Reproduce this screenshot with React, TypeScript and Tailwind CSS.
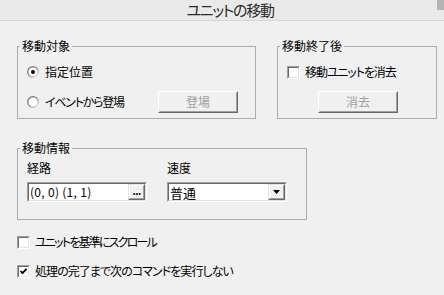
import type { ReactNode } from "react";

const Radio = ({ checked }: { checked?: boolean }) => (
  <svg width="12" height="12" viewBox="0 0 12 12" className="shrink-0">
    <defs>
      <linearGradient id="rg" x1="0" y1="0" x2="1" y2="1">
        <stop offset="0" stopColor="#6d6d6d" />
        <stop offset="0.55" stopColor="#9a9a9a" />
        <stop offset="1" stopColor="#f4f4f4" />
      </linearGradient>
    </defs>
    <circle cx="6" cy="6" r="5.3" fill="#fff" stroke="url(#rg)" strokeWidth="1.4" />
    {checked && <circle cx="6" cy="6" r="2" fill="#000" />}
  </svg>
);

const Check = ({ checked }: { checked?: boolean }) => (
  <div className="w-[13px] h-[13px] shrink-0 border border-[#a0a0a0] border-b-white border-r-white">
    <div className="w-full h-full border border-[#696969] border-b-[#e3e3e3] border-r-[#e3e3e3] bg-white flex items-center justify-center">
      {checked && (
        <svg width="9" height="9" viewBox="0 0 9 9">
          <polyline points="1.5,4 3.5,6.2 7.5,1.8" fill="none" stroke="#000" strokeWidth="1.8" />
        </svg>
      )}
    </div>
  </div>
);

const Button = ({ children, className }: { children: ReactNode; className?: string }) => (
  <div className={`w-[80px] h-[22px] border border-white border-b-[#696969] border-r-[#696969] ${className ?? ""}`}>
    <div className="w-full h-full border border-[#f0f0f0] border-b-[#a0a0a0] border-r-[#a0a0a0] flex items-center justify-center text-[#a0a0a0] text-[12px] leading-none">
      {children}
    </div>
  </div>
);

const Group = ({
  title,
  className,
  children,
}: {
  title: string;
  className: string;
  children: ReactNode;
}) => (
  <fieldset className={`border border-[#acacac] min-w-0 ${className}`}>
    <legend className="ml-[2px] px-[2px] text-[12px] leading-[16px]">{title}</legend>
    {children}
  </fieldset>
);

const SunkenBox = ({ children }: { children: ReactNode }) => (
  <div className="w-[120px] h-[20px] border border-[#a0a0a0] border-b-white border-r-white">
    <div className="w-full h-full border border-[#696969] border-b-[#e3e3e3] border-r-[#e3e3e3] bg-white flex items-center">
      {children}
    </div>
  </div>
);

const SmallButton = ({ children }: { children: ReactNode }) => (
  <div className="w-[17px] h-[16px] ml-auto border border-[#e3e3e3] border-b-[#696969] border-r-[#696969] bg-[#f0f0f0]">
    <div className="w-full h-full border border-white border-b-[#a0a0a0] border-r-[#a0a0a0] flex items-center justify-center">
      {children}
    </div>
  </div>
);

export default function App() {
  return (
    <div className="relative w-[444px] h-[295px] overflow-hidden bg-[#f0f0f0] text-black text-[12px] font-['Noto_Sans_CJK_JP','Noto_Sans',sans-serif] [font-feature-settings:'palt']">
      <div className="h-[21px] bg-[#e9e9e9] border-b border-[#d6d6d6] flex items-center justify-center pl-[16px] text-[15px] leading-[20px] tracking-[-1.3px] text-[#2a2a2a]">
        ユニットの移動
      </div>
      <div className="absolute top-0 right-0 w-[7px] h-[10px] bg-[#b4b4b4]" />

      <div className="pl-[17px] pt-[17px] flex flex-col">
        <div className="flex gap-[21px]">
          <Group title="移動対象" className="w-[239px] h-[81px]">
            <div className="pl-[9px] pr-[17px] pt-[8px] flex flex-col gap-[9px]">
              <div className="h-[20px] flex items-center gap-[6px]">
                <Radio checked />
                <span className="leading-none">指定位置</span>
              </div>
              <div className="h-[22px] flex items-center justify-between">
                <div className="flex items-center gap-[6px]">
                  <Radio />
                  <span className="leading-none tracking-[-1.25px]">イベントから登場</span>
                </div>
                <Button>登場</Button>
              </div>
            </div>
          </Group>

          <Group title="移動終了後" className="w-[160px] h-[81px]">
            <div className="pl-[9px] pt-[8px] flex flex-col gap-[9px]">
              <div className="h-[20px] flex items-center gap-[5px]">
                <Check />
                <span className="leading-none tracking-[-1.1px]">移動ユニットを消去</span>
              </div>
              <div className="h-[22px] flex items-center">
                <Button className="ml-[31px]">消去</Button>
              </div>
            </div>
          </Group>
        </div>

        <Group title="移動情報" className="mt-[21px] w-[290px] h-[80px]">
          <div className="pl-[9px] pt-[4px] flex gap-[20px]">
            <div className="w-[120px] flex flex-col gap-[6px]">
              <div className="h-[16px] flex items-center leading-none">経路</div>
              <SunkenBox>
                <span className="pl-[1px] leading-none text-[12px] [font-feature-settings:normal] tracking-[0.3px]">
                  (0, 0) (1, 1)
                </span>
                <SmallButton>
                  <span className="font-bold text-[10px] leading-none tracking-[-0.5px] -mt-[3px]">...</span>
                </SmallButton>
              </SunkenBox>
            </div>
            <div className="w-[120px] flex flex-col gap-[6px]">
              <div className="h-[16px] flex items-center leading-none">速度</div>
              <SunkenBox>
                <span className="pl-[1px] leading-none text-[13px]">普通</span>
                <SmallButton>
                  <svg width="7" height="4" viewBox="0 0 7 4">
                    <polygon points="0,0 7,0 3.5,4" fill="#000" />
                  </svg>
                </SmallButton>
              </SunkenBox>
            </div>
          </div>
        </Group>

        <div className="mt-[12px] flex flex-col gap-[9px]">
          <div className="h-[20px] flex items-center gap-[5px]">
            <Check />
            <span className="leading-none tracking-[-1.8px]">ユニットを基準にスクロール</span>
          </div>
          <div className="h-[20px] flex items-center gap-[5px]">
            <Check checked />
            <span className="leading-none tracking-[-0.95px]">処理の完了まで次のコマンドを実行しない</span>
          </div>
        </div>
      </div>
    </div>
  );
}
